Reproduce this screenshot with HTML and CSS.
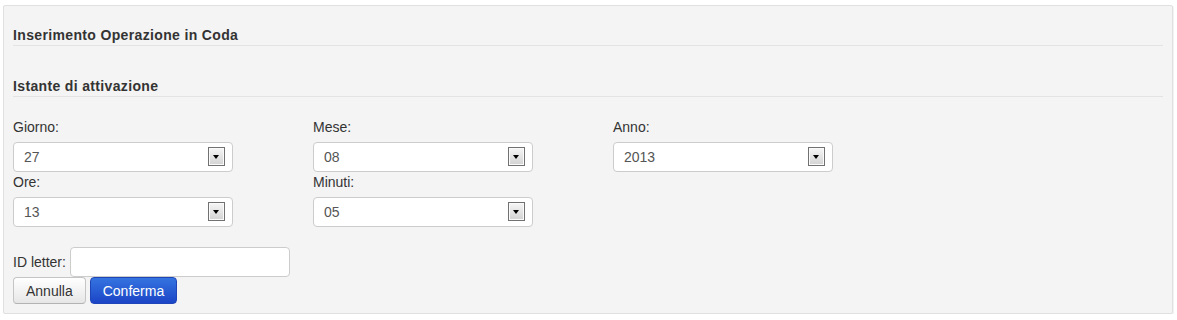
FILE: index.html
```html
<!DOCTYPE html>
<html lang="it">
<head>
    <meta charset="UTF-8">
    <title>Inserimento Operazione in Coda</title>
    <link rel="stylesheet" href="styles.css">
</head>
<body>
    <div class="well">
        <form id="queueForm">
            <div class="legend">Inserimento Operazione in Coda</div>
            <div class="legend">Istante di attivazione</div>

            <div class="date-grid">
                <div class="field">
                    <label for="giorno">Giorno:</label>
                    <div class="select-wrap">
                        <select id="giorno"><option>27</option></select>
                        <span class="arrow"></span>
                    </div>
                </div>
                <div class="field">
                    <label for="mese">Mese:</label>
                    <div class="select-wrap">
                        <select id="mese"><option>08</option></select>
                        <span class="arrow"></span>
                    </div>
                </div>
                <div class="field">
                    <label for="anno">Anno:</label>
                    <div class="select-wrap">
                        <select id="anno"><option>2013</option></select>
                        <span class="arrow"></span>
                    </div>
                </div>
                <div class="field">
                    <label for="ore">Ore:</label>
                    <div class="select-wrap">
                        <select id="ore"><option>13</option></select>
                        <span class="arrow"></span>
                    </div>
                </div>
                <div class="field">
                    <label for="minuti">Minuti:</label>
                    <div class="select-wrap">
                        <select id="minuti"><option>05</option></select>
                        <span class="arrow"></span>
                    </div>
                </div>
            </div>

            <div class="id-row">
                <label for="idLetter">ID letter:</label>
                <input type="text" id="idLetter" name="idLetter">
            </div>

            <div class="actions">
                <button type="button" class="btn">Annulla</button>
                <button type="submit" class="btn btn-primary">Conferma</button>
            </div>
        </form>
    </div>
</body>
</html>
```

FILE: styles.css
```css
body {
    margin: 0;
    background-color: #fff;
    font-family: "Liberation Sans", Arial, sans-serif;
    font-size: 14px;
    color: #333;
}

.well {
    margin: 5px 4px 0 3px;
    padding: 0 9px 9px;
    background-color: #f4f4f4;
    border: 1px solid #e0e0e0;
    border-radius: 2px;
    box-shadow: 1px 1px 1px rgba(0,0,0,0.06);
}

.legend {
    font-size: 14px;
    font-weight: bold;
    letter-spacing: 0.35px;
    line-height: 19px;
    color: #333;
    border-bottom: 1px solid #e3e3e3;
    margin-top: 20px;
}

.legend + .legend {
    margin-top: 31px;
}

.date-grid {
    display: grid;
    grid-template-columns: repeat(3, 300px);
    margin-top: 20px;
}

.field label {
    display: block;
    line-height: 20px;
    margin-bottom: 5px;
}

.select-wrap {
    position: relative;
    width: 220px;
}

select {
    appearance: none;
    -webkit-appearance: none;
    display: block;
    width: 220px;
    height: 30px;
    padding: 0 10px;
    border: 1px solid #ccc;
    border-radius: 4px;
    background-color: #fff;
    font-family: inherit;
    font-size: 14px;
    color: #555;
}

.arrow {
    position: absolute;
    top: 5px;
    right: 8px;
    width: 15px;
    height: 17px;
    border: 1px solid #717171;
    background: linear-gradient(#f6f6f6, #d2d2d2);
    box-shadow: inset 0 0 0 1px #fafafa;
    pointer-events: none;
}

.arrow::after {
    content: "";
    position: absolute;
    left: 4px;
    top: 7px;
    border-left: 3.5px solid transparent;
    border-right: 3.5px solid transparent;
    border-top: 4px solid #000;
}

.id-row {
    display: flex;
    align-items: center;
    gap: 4px;
    margin-top: 20px;
}

.id-row input {
    width: 220px;
    height: 30px;
    box-sizing: border-box;
    border: 1px solid #ccc;
    border-radius: 4px;
    background-color: #fff;
    padding: 0 6px;
}

.actions {
    display: flex;
    gap: 4px;
}

.btn {
    height: 27px;
    padding: 0 12px;
    font-family: inherit;
    font-size: 14px;
    color: #333;
    border: 1px solid #c5c5c5;
    border-bottom-color: #b3b3b3;
    border-radius: 4px;
    background: linear-gradient(#ffffff, #e6e6e6);
    cursor: pointer;
}

.btn-primary {
    color: #fff;
    border-color: #1f45b8;
    background: linear-gradient(#3574e0, #1b45c6);
}
```
